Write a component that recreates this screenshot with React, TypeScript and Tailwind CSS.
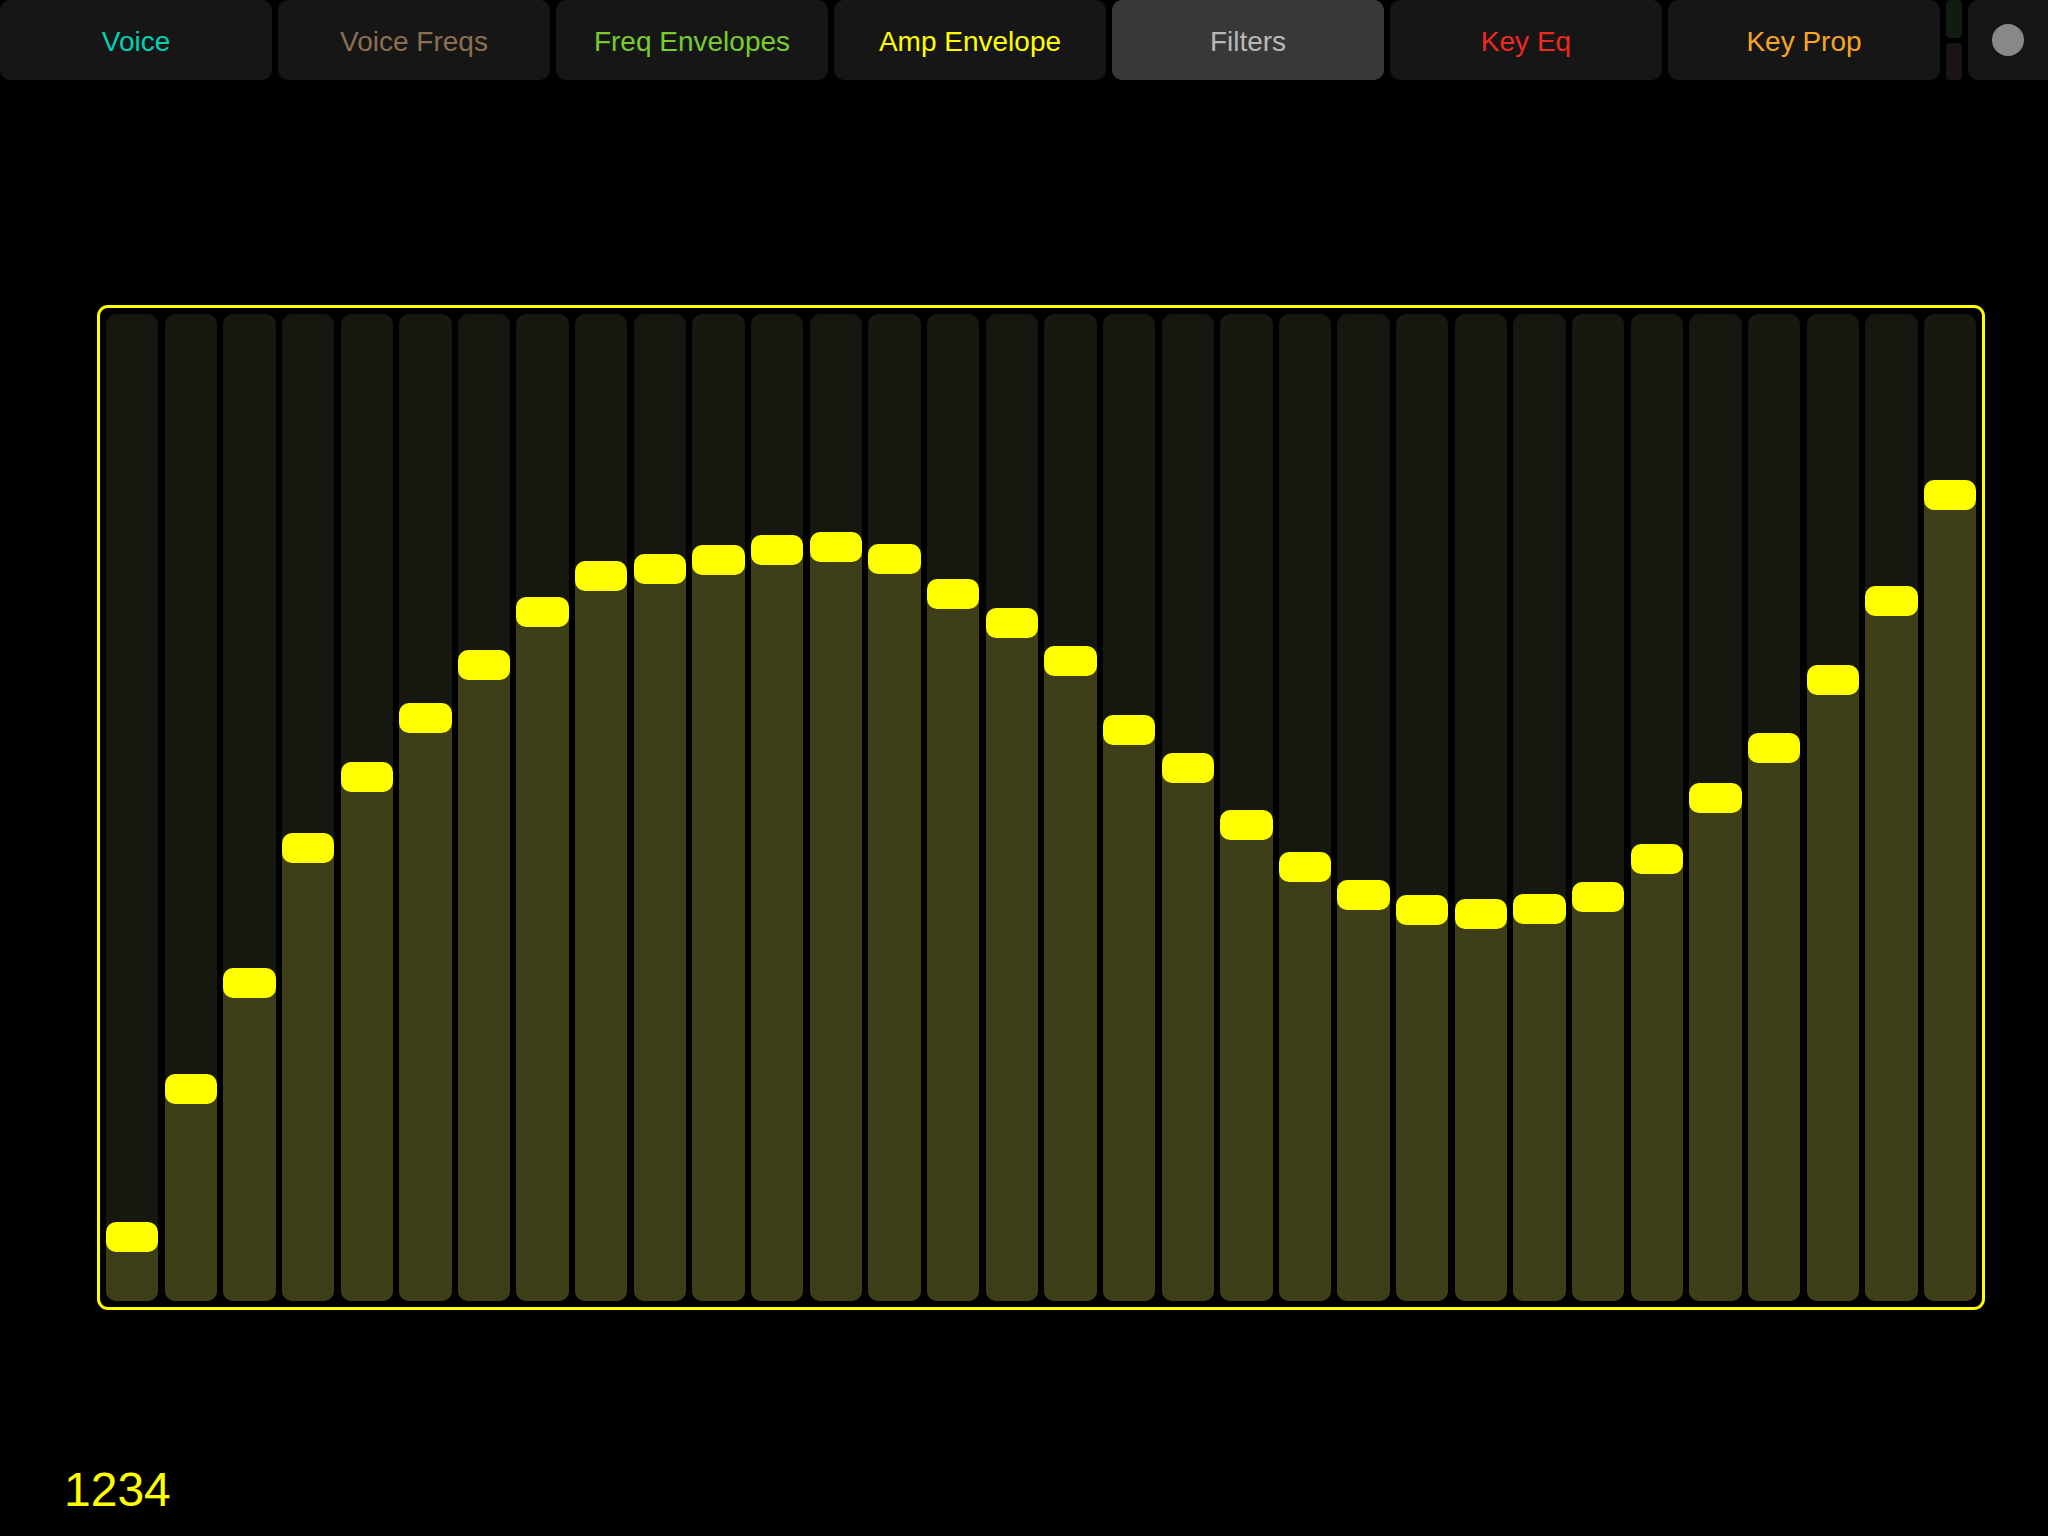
import React from "react";

const tabs = [
  { label: "Voice", color: "text-[#00d2b4]", active: false },
  { label: "Voice Freqs", color: "text-[#8c6f52]", active: false },
  { label: "Freq Envelopes", color: "text-[#78cc2c]", active: false },
  { label: "Amp Envelope", color: "text-[#ffff00]", active: false },
  { label: "Filters", color: "text-[#b8b8b8]", active: true },
  { label: "Key Eq", color: "text-[#ee2a1e]", active: false },
  { label: "Key Prop", color: "text-[#f5a623]", active: false },
];

// handle centre offsets from column top (px)
const handles = [
  923, 775, 669, 534, 463, 404, 351, 298, 262, 255, 246, 236, 233, 245, 280, 309,
  347, 416, 454, 511, 553, 581, 596, 600, 595, 583, 545, 484, 434, 366, 287, 181,
];

export default function App() {
  return (
    <div
      className="w-[2048px] h-[1536px] bg-black overflow-hidden flex flex-col"
      style={{ fontFamily: '"Liberation Sans", Arial, sans-serif' }}
    >
      {/* top bar */}
      <div className="flex h-[80px] gap-[6px]">
        {tabs.map((t) => (
          <div
            key={t.label}
            className={`w-[272px] h-[80px] rounded-[10px] flex items-center justify-center pt-[3px] text-[28px] ${
              t.active ? "bg-[#383838]" : "bg-[#161616]"
            } ${t.color}`}
          >
            {t.label}
          </div>
        ))}
        <div className="w-[16px] h-[80px] flex flex-col gap-[5px]">
          <div className="flex-1 rounded-[4px] bg-[#121b12]" />
          <div className="flex-1 rounded-[4px] bg-[#1b1414]" />
        </div>
        <div className="w-[80px] h-[80px] rounded-l-[10px] bg-[#161616] flex items-center justify-center">
          <div className="w-[32px] h-[32px] rounded-full bg-[#888888]" />
        </div>
      </div>

      {/* slider box */}
      <div className="ml-[97px] mt-[225px] w-[1888px] h-[1005px] border-[3px] border-[#ffff00] rounded-[11px] p-[6px] flex gap-[6.3px]">
        {handles.map((c, i) => (
          <div
            key={i}
            className="w-[52.4px] h-full rounded-[10px] bg-[#16170f] overflow-hidden flex flex-col"
          >
            <div className="shrink-0" style={{ height: c - 15 }} />
            <div className="shrink-0 h-[30px] rounded-[10px] bg-[#ffff00] relative z-10" />
            <div className="flex-1 bg-[#3e3f18] -mt-[15px]" />
          </div>
        ))}
      </div>

      <div className="ml-[64px] mt-[156px] text-[48px] leading-none text-[#ffff00]">1234</div>
    </div>
  );
}
